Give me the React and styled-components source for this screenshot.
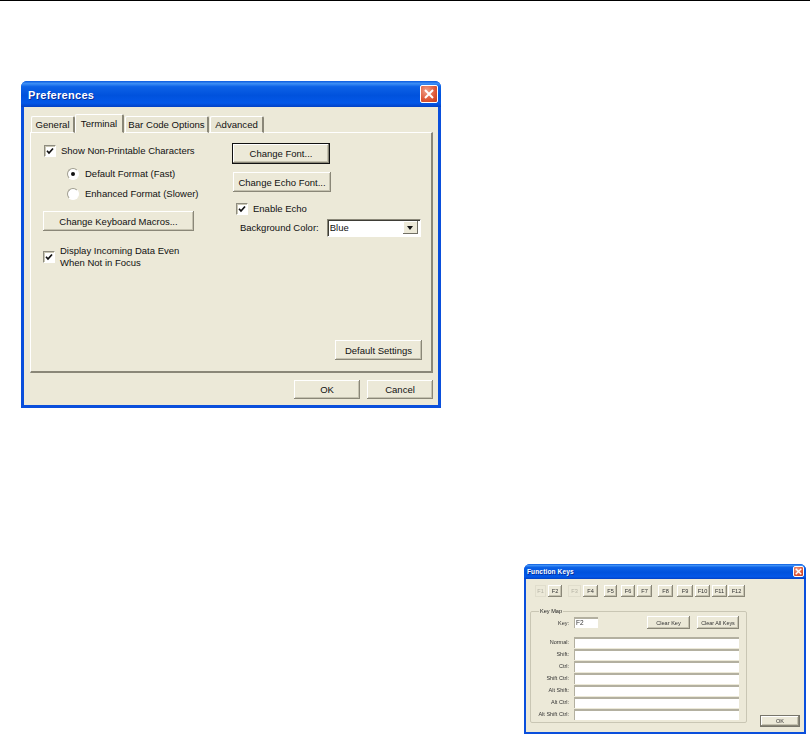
import React from "react";
import styled, { createGlobalStyle } from "styled-components";

const Global = createGlobalStyle`
  html, body { margin: 0; padding: 0; background: #fff; }
  body { width: 810px; height: 734px; overflow: hidden; font-family: "Liberation Sans", Arial, sans-serif; }
`;

const Page = styled.div`
  width: 810px;
  height: 734px;
  box-sizing: border-box;
  border-top: 1px solid #000;
  display: flex;
  flex-direction: column;
`;

const WindowFrame = styled.div`
  box-sizing: border-box;
  width: ${(p) => p.$w}px;
  height: ${(p) => p.$h}px;
  margin-left: ${(p) => p.$left}px;
  margin-top: ${(p) => p.$top}px;
  display: flex;
  flex-direction: column;
  background: #0a4fdc;
  border-radius: 6px 6px 0 0;
  padding: 0 ${(p) => p.$edge}px ${(p) => p.$edge}px;
  color: #111;
`;

const TitleBar = styled.div`
  height: ${(p) => p.$h}px;
  flex: none;
  margin: 0 -${(p) => p.$edge}px;
  padding: 0 ${(p) => p.$pad}px 0 ${(p) => p.$text}px;
  display: flex;
  align-items: center;
  justify-content: space-between;
  border-radius: 6px 6px 0 0;
  background: linear-gradient(180deg, #0a5be0 0%, #3d8ff5 10%, #0d62e6 22%, #0052dd 55%, #0458e8 85%, #0341c4 100%);
`;

const TitleText = styled.span`
  color: #fff;
  font-weight: 700;
  font-size: ${(p) => p.$size}px;
  letter-spacing: ${(p) => p.$track}px;
  text-shadow: 1px 1px 0 #0b2f9c;
  padding-top: ${(p) => p.$drop}px;
`;

const CloseBox = styled.span`
  width: ${(p) => p.$s}px;
  height: ${(p) => p.$s}px;
  border-radius: 2px;
  border: 1px solid #fff;
  box-sizing: border-box;
  background: radial-gradient(circle at 35% 30%, #f0a08a, #dd5635 60%, #c23d1e);
  display: flex;
  align-items: center;
  justify-content: center;
  svg { display: block; }
`;

const Body = styled.div`
  flex: 1;
  background: #ece9d8;
  display: flex;
  flex-direction: column;
  min-height: 0;
`;

const PrefBody = styled(Body)`
  padding: 7px 5px 0 6px;
`;

const TabRow = styled.div`
  display: flex;
  align-items: flex-end;
  height: 19px;
  margin-bottom: -1px;
  position: relative;
  z-index: 1;
`;

const Tab = styled.div`
  box-sizing: border-box;
  width: ${(p) => p.$w}px;
  height: ${(p) => (p.$active ? 19 : 17)}px;
  margin-left: ${(p) => p.$gap || 0}px;
  display: flex;
  align-items: center;
  justify-content: center;
  font-size: 9.6px;
  background: ${(p) => (p.$active ? "#ece9d8" : "#e8e5d4")};
  border-top: 1px solid #fff;
  border-left: 1px solid #fff;
  border-right: 2px solid #8a8778;
  border-radius: 2px 2px 0 0;
  border-bottom: ${(p) => (p.$active ? "1px solid #ece9d8" : "1px solid #fff")};
  white-space: nowrap;
`;

const Panel = styled.div`
  box-sizing: border-box;
  height: 241px;
  border-top: 1px solid #fff;
  border-left: 1px solid #fff;
  border-right: 2px solid #8a8778;
  border-bottom: 2px solid #8a8778;
  padding: 11px 10px 11px 12px;
  display: grid;
  grid-template-columns: 189px 1fr;
`;

const Column = styled.div`
  display: flex;
  flex-direction: column;
  align-items: flex-start;
  min-height: 0;
`;

const Row = styled.div`
  display: flex;
  align-items: ${(p) => p.$align || "center"};
  margin: ${(p) => p.$m || "0"};
  font-size: 9.5px;
  line-height: 12px;
  white-space: nowrap;
`;

const CheckBox = styled.span`
  box-sizing: border-box;
  flex: none;
  width: 12px;
  height: 12px;
  margin-right: 5px;
  background: #fff;
  border: 1px solid #8e8c7f;
  border-right-color: #fff;
  border-bottom-color: #fff;
  box-shadow: inset 1px 1px 0 #c9c6b4;
  display: flex;
  align-items: center;
  justify-content: center;
`;

const RadioDot = styled.span`
  box-sizing: border-box;
  flex: none;
  width: 12px;
  height: 12px;
  margin-right: 6px;
  border-radius: 50%;
  background: #fff;
  border: 1px solid #a09e90;
  border-right-color: #fff;
  border-bottom-color: #fff;
  display: flex;
  align-items: center;
  justify-content: center;
  &::after {
    content: "";
    width: 4px;
    height: 4px;
    border-radius: 50%;
    background: ${(p) => (p.$on ? "#111" : "transparent")};
  }
`;

const Btn = styled.div`
  box-sizing: border-box;
  width: ${(p) => p.$w}px;
  height: ${(p) => p.$h}px;
  margin: ${(p) => p.$m || "0"};
  display: flex;
  align-items: center;
  justify-content: center;
  flex: none;
  font-size: ${(p) => p.$size || 9.5}px;
  white-space: nowrap;
  background: #ece9d8;
  color: ${(p) => p.$color || "#111"};
  border: ${(p) => (p.$ring ? `1px solid ${p.$ring}` : "none")};
  box-shadow: ${(p) =>
    p.$flat
      ? "inset 0 0 0 1px #e0ddcc"
      : "inset -1px -1px 0 #8a8778, inset 1px 1px 0 #fff, inset -2px -2px 0 #c5c2b0"};
`;

const SelectBox = styled.div`
  box-sizing: border-box;
  width: 94px;
  height: 18px;
  margin-left: 8px;
  background: #fff;
  border: 1px solid #8a8778;
  border-right-color: #fff;
  border-bottom-color: #fff;
  box-shadow: inset 1px 1px 0 #3e3d36;
  padding: 1px 2px 2px 2px;
  display: flex;
  align-items: center;
  justify-content: space-between;
`;

const SelectArrow = styled.span`
  width: 15px;
  height: 13px;
  background: #ece9d8;
  box-shadow: inset -1px -1px 0 #716f64, inset 1px 1px 0 #fff;
  display: flex;
  align-items: center;
  justify-content: center;
  &::after {
    content: "";
    border-left: 3px solid transparent;
    border-right: 3px solid transparent;
    border-top: 4px solid #111;
  }
`;

const Footer = styled.div`
  display: flex;
  justify-content: flex-end;
  gap: 7px;
  padding-top: 7px;
`;

/* Function Keys dialog */
const KeysBody = styled(Body)`
  padding: 6px 6px 0 4px;
  position: relative;
  filter: blur(0.3px);
`;

const KeyStrip = styled.div`
  display: flex;
  height: 12px;
  margin: 0 0 0 5px;
`;

const KeyGroup = styled.fieldset`
  box-sizing: border-box;
  width: 217px;
  height: 115px;
  margin: 11px 0 0 0;
  padding: 1px 7px 0 5px;
  border: 1px solid #c9c6b4;
  border-radius: 2px;
  display: flex;
  flex-direction: column;
  min-width: 0;
  legend {
    font-size: 5.6px;
    line-height: 7px;
    padding: 0 1px;
    margin-left: 3px;
    color: #222;
  }
`;

const KeyLine = styled.div`
  display: flex;
  align-items: center;
  height: ${(p) => p.$h}px;
  margin-bottom: ${(p) => p.$mb || 0}px;
`;

const KeyLabel = styled.span`
  width: 33px;
  flex: none;
  text-align: right;
  font-size: 5.5px;
  color: #333;
  white-space: nowrap;
  margin-right: 5px;
`;

const KeyInput = styled.div`
  box-sizing: border-box;
  width: ${(p) => p.$w}px;
  height: ${(p) => p.$h || 11}px;
  flex: none;
  background: #fff;
  border-top: 2px solid #b3b0a0;
  border-left: 1px solid #b3b0a0;
  padding-left: 1px;
  font-size: 6.5px;
  line-height: 8px;
  color: #333;
`;

const OkSlot = styled.div`
  position: absolute;
  right: 4px;
  bottom: 5px;
`;

const Check = ({ s = 8 }) => (
  <svg width={s} height={s} viewBox="0 0 8 8">
    <path d="M1 3.8 L3 6 L7 1.5" fill="none" stroke="#111" strokeWidth="1.7" />
  </svg>
);

const XMark = ({ s }) => (
  <svg width={s} height={s} viewBox="0 0 10 10">
    <path d="M1 1 L9 9 M9 1 L1 9" stroke="#fff" strokeWidth="2" />
  </svg>
);

const keys = [
  ["F1", 11, 0, true], ["F2", 14, 2, false], ["F3", 13, 6, true], ["F4", 15, 2, false],
  ["F5", 13, 6, false], ["F6", 14, 4, false], ["F7", 15, 2, false], ["F8", 15, 6, false],
  ["F9", 16, 4, false], ["F10", 15, 2, false], ["F11", 15, 2, false], ["F12", 17, 1, false],
];

const mapRows = ["Normal:", "Shift:", "Ctrl:", "Shift Ctrl:", "Alt Shift:", "Alt Ctrl:", "Alt Shift Ctrl:"];

export default function App() {
  return (
    <Page>
      <Global />
      <WindowFrame $w={420} $h={327} $left={21} $top={80} $edge={3}>
        <TitleBar $h={26} $edge={3} $pad={3} $text={7}>
          <TitleText $size={11} $track={0.3} $drop={1}>Preferences</TitleText>
          <CloseBox $s={18}><XMark s={10} /></CloseBox>
        </TitleBar>
        <PrefBody>
          <TabRow>
            <Tab $w={44} $gap={1}>General</Tab>
            <Tab $w={49} $active>Terminal</Tab>
            <Tab $w={84} $gap={1}>Bar Code Options</Tab>
            <Tab $w={54} $gap={1}>Advanced</Tab>
          </TabRow>
          <Panel>
            <Column>
              <Row $m="1px 0 0 1px"><CheckBox><Check /></CheckBox>Show Non-Printable Characters</Row>
              <Row $m="11px 0 0 24px"><RadioDot $on />Default Format (Fast)</Row>
              <Row $m="8px 0 0 24px"><RadioDot />Enhanced Format (Slower)</Row>
              <Btn $w={151} $h={20} $m="11px 0 0 0">Change Keyboard Macros...</Btn>
              <Row $m="14px 0 0 0" $align="center">
                <CheckBox><Check /></CheckBox>
                <span>Display Incoming Data Even<br />When Not in Focus</span>
              </Row>
            </Column>
            <Column>
              <Btn $w={98} $h={21} $ring="#111" $m="-1px 0 0 0">Change Font...</Btn>
              <Btn $w={98} $h={20} $m="8px 0 0 1px">Change Echo Font...</Btn>
              <Row $m="11px 0 0 4px"><CheckBox><Check /></CheckBox>Enable Echo</Row>
              <Row $m="4px 0 0 8px">
                Background Color:
                <SelectBox>Blue<SelectArrow /></SelectBox>
              </Row>
              <Btn $w={87} $h={20} $m="auto 0 0 103px">Default Settings</Btn>
            </Column>
          </Panel>
          <Footer>
            <Btn $w={66} $h={19}>OK</Btn>
            <Btn $w={66} $h={19}>Cancel</Btn>
          </Footer>
        </PrefBody>
      </WindowFrame>

      <WindowFrame $w={282} $h={170} $left={524} $top={156} $edge={2}>
        <TitleBar $h={15} $edge={2} $pad={2} $text={3}>
          <TitleText $size={6.5} $track={0.15} $drop={0}>Function Keys</TitleText>
          <CloseBox $s={11}><XMark s={7} /></CloseBox>
        </TitleBar>
        <KeysBody>
          <KeyStrip>
            {keys.map(([k, w, gap, off]) => (
              <Btn key={k} $w={w} $h={12} $size={5.6} $m={`0 0 0 ${gap}px`} $flat={off} $color={off ? "#b5b3a5" : "#333"}>{k}</Btn>
            ))}
          </KeyStrip>
          <KeyGroup>
            <legend>Key Map</legend>
            <KeyLine $h={13} $mb={7}>
              <KeyLabel>Key:</KeyLabel>
              <KeyInput $w={24}>F2</KeyInput>
              <Btn $w={43} $h={13} $size={5.6} $m="0 0 0 49px" $color="#333">Clear Key</Btn>
              <Btn $w={42} $h={13} $size={5.4} $m="0 0 0 7px" $color="#333">Clear All Keys</Btn>
            </KeyLine>
            {mapRows.map((r) => (
              <KeyLine key={r} $h={12}>
                <KeyLabel>{r}</KeyLabel>
                <KeyInput $w={165} />
              </KeyLine>
            ))}
          </KeyGroup>
          <OkSlot><Btn $w={40} $h={12} $size={5.6} $color="#333" $ring="#77756a">OK</Btn></OkSlot>
        </KeysBody>
      </WindowFrame>
    </Page>
  );
}
